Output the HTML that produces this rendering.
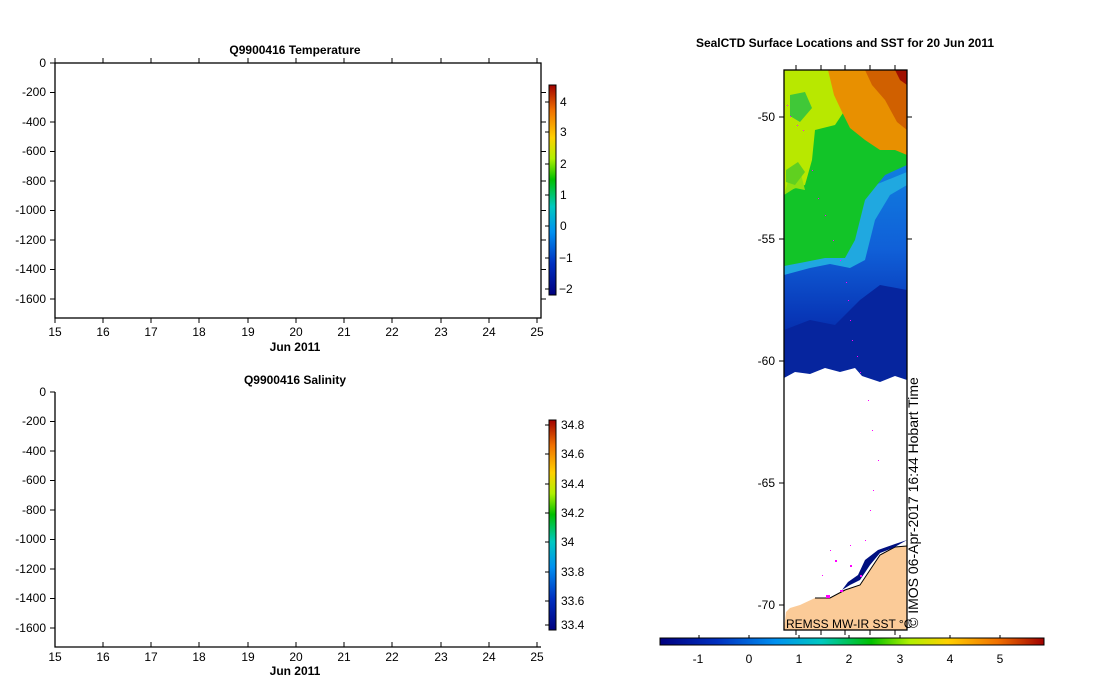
<!DOCTYPE html>
<html><head><meta charset="utf-8"><style>
html,body{margin:0;padding:0;background:#fff;}
svg{display:block;}
text{font-family:"Liberation Sans",sans-serif;font-size:12px;fill:#000;}
.b{font-weight:bold;}
</style></head><body>
<svg width="1099" height="700" viewBox="0 0 1099 700" xmlns="http://www.w3.org/2000/svg">
<defs>
<linearGradient id="jet" x1="0" y1="1" x2="0" y2="0">
<stop offset="0" stop-color="#00007f"/><stop offset="0.15" stop-color="#0030c0"/>
<stop offset="0.3" stop-color="#0090f0"/><stop offset="0.42" stop-color="#00c8c0"/>
<stop offset="0.55" stop-color="#00c000"/><stop offset="0.65" stop-color="#b0f000"/>
<stop offset="0.75" stop-color="#ffd000"/><stop offset="0.88" stop-color="#f07000"/>
<stop offset="1" stop-color="#a00000"/></linearGradient>
<linearGradient id="jeth" x1="0" y1="0" x2="1" y2="0">
<stop offset="0" stop-color="#00007f"/><stop offset="0.15" stop-color="#0030c0"/>
<stop offset="0.3" stop-color="#0090f0"/><stop offset="0.42" stop-color="#00c8c0"/>
<stop offset="0.55" stop-color="#00c000"/><stop offset="0.65" stop-color="#b0f000"/>
<stop offset="0.75" stop-color="#ffd000"/><stop offset="0.88" stop-color="#f07000"/>
<stop offset="1" stop-color="#a00000"/></linearGradient>
<linearGradient id="blu" x1="0" y1="0" x2="0" y2="1">
<stop offset="0" stop-color="#1080e0"/><stop offset="0.4" stop-color="#1060d8"/>
<stop offset="0.7" stop-color="#0838b8"/><stop offset="1" stop-color="#001a90"/></linearGradient>
</defs>

<!-- Temperature plot -->
<text x="295" y="54" text-anchor="middle" class="b">Q9900416  Temperature</text>
<rect x="55" y="63" width="486" height="255" fill="none" stroke="#000" stroke-width="1.3"/>
<g stroke="#000">
<path d="M50 63h5M50 92.5h5M50 122h5M50 151.5h5M50 181h5M50 210.5h5M50 240h5M50 269.5h5M50 299h5"/>
<path d="M541 92.5h5M541 122h5M541 151.5h5M541 181h5M541 210.5h5M541 240h5M541 269.5h5M541 299h5"/>
<path d="M55 58v5M103 58v5M151 58v5M199 58v5M248 58v5M296 58v5M344 58v5M392 58v5M441 58v5M489 58v5M537 58v5"/>
<path d="M55 318v5M103 318v5M151 318v5M199 318v5M248 318v5M296 318v5M344 318v5M392 318v5M441 318v5M489 318v5M537 318v5"/>
</g>
<g text-anchor="end">
<text x="46" y="67">0</text><text x="46" y="96">-200</text><text x="46" y="126">-400</text><text x="46" y="155">-600</text><text x="46" y="185">-800</text><text x="46" y="214">-1000</text><text x="46" y="244">-1200</text><text x="46" y="273">-1400</text><text x="46" y="303">-1600</text>
</g>
<g text-anchor="middle">
<text x="55" y="336">15</text><text x="103" y="336">16</text><text x="151" y="336">17</text><text x="199" y="336">18</text><text x="248" y="336">19</text><text x="296" y="336">20</text><text x="344" y="336">21</text><text x="392" y="336">22</text><text x="441" y="336">23</text><text x="489" y="336">24</text><text x="537" y="336">25</text>
<text x="295" y="351" class="b">Jun 2011</text>
</g>
<rect x="549" y="85" width="7" height="210" fill="url(#jet)" stroke="#000"/>
<g stroke="#000"><path d="M545 102h4M545 132h4M545 164h4M545 195h4M545 226h4M545 258h4M545 289h4"/></g>
<g><text x="560" y="106">4</text><text x="560" y="136">3</text><text x="560" y="168">2</text><text x="560" y="199">1</text><text x="560" y="230">0</text><text x="559" y="262">−1</text><text x="559" y="293">−2</text></g>

<!-- Salinity plot -->
<text x="295" y="384" text-anchor="middle" class="b">Q9900416  Salinity</text>
<path d="M55 392V647H541" fill="none" stroke="#000" stroke-width="1.3"/>
<g stroke="#000">
<path d="M50 392h5M50 421.5h5M50 451h5M50 480.5h5M50 510h5M50 539.5h5M50 569h5M50 598.5h5M50 628h5"/>
<path d="M55 647v-5M103 647v-5M151 647v-5M199 647v-5M248 647v-5M296 647v-5M344 647v-5M392 647v-5M441 647v-5M489 647v-5M537 647v-5"/>
</g>
<g text-anchor="end">
<text x="46" y="396">0</text><text x="46" y="425">-200</text><text x="46" y="455">-400</text><text x="46" y="484">-600</text><text x="46" y="514">-800</text><text x="46" y="543">-1000</text><text x="46" y="573">-1200</text><text x="46" y="602">-1400</text><text x="46" y="632">-1600</text>
</g>
<g text-anchor="middle">
<text x="55" y="661">15</text><text x="103" y="661">16</text><text x="151" y="661">17</text><text x="199" y="661">18</text><text x="248" y="661">19</text><text x="296" y="661">20</text><text x="344" y="661">21</text><text x="392" y="661">22</text><text x="441" y="661">23</text><text x="489" y="661">24</text><text x="537" y="661">25</text>
<text x="295" y="675" class="b">Jun 2011</text>
</g>
<rect x="549" y="420" width="7" height="210" fill="url(#jet)" stroke="#000"/>
<g stroke="#000"><path d="M545 425h4M545 454h4M545 484h4M545 513h4M545 542h4M545 572h4M545 601h4M545 625h4"/></g>
<g><text x="561" y="429">34.8</text><text x="561" y="458">34.6</text><text x="561" y="488">34.4</text><text x="561" y="517">34.2</text><text x="561" y="546">34</text><text x="561" y="576">33.8</text><text x="561" y="605">33.6</text><text x="561" y="629">33.4</text></g>

<!-- Map -->
<text x="845" y="47" text-anchor="middle" class="b">SealCTD Surface Locations and SST for 20 Jun 2011</text>
<rect x="784" y="70" width="123" height="560" fill="#fff"/>
<rect x="784" y="160" width="123" height="222" fill="url(#blu)"/>
<path d="M784 255L810 250L835 255L850 240L858 210L875 185L907 172V185L890 195L875 220L865 260L850 268L830 264L810 268L784 275Z" fill="#20a8e0"/>
<path d="M784 70H907V165L885 175L865 200L855 240L845 258L825 258L805 262L784 266Z" fill="#12c428"/>
<path d="M784 70H840L845 110L835 125L815 130L812 160L805 185L790 190L784 195Z" fill="#b8e800"/>
<path d="M784 195L795 188L805 190L800 170L790 175Z" fill="#90e010"/>
<path d="M790 95L805 92L812 108L800 122L790 116Z" fill="#40c838"/>
<path d="M786 170L798 162L805 172L795 185L786 182Z" fill="#60d020"/>
<path d="M828 70H907V155L895 150L880 150L865 140L850 128L842 112L834 95Z" fill="#e89000"/>
<path d="M865 70H907V130L897 122L885 100L872 85Z" fill="#d06000"/>
<path d="M895 70H907V85L900 80Z" fill="#a01000"/>
<path d="M860 300L880 285L907 290V382H784V330L810 320L835 325Z" fill="#06259e"/>
<path d="M784 382V378L795 372L810 374L825 368L840 372L855 368L862 376L880 382L895 376L907 380V382Z" fill="#fff"/>
<path d="M907 546L895 547L880 555L870 570L860 585L845 590L830 598L815 598L800 605L790 608L786 612L784 630H907Z" fill="#fbcb98"/>
<path d="M907 546L895 547L880 555L870 570L860 585L845 590L830 598L815 598" fill="none" stroke="#000" stroke-width="1"/>
<path d="M907 540L893 548L880 553L870 565L860 580L850 585L842 590L848 582L858 575L865 560L878 550L895 544Z" fill="#001080"/>
<g fill="#ff00ff">
<path d="M787 105h1v1h-1zM790 116h1v1h-1zM797 125h1v1h-1zM803 130h1v1h-1zM812 170h1v1h-1zM818 198h1v1h-1zM825 215h1v1h-1zM833 240h1v1h-1zM840 260h1v1h-1zM846 282h1v1h-1zM848 300h1v1h-1zM850 320h1v1h-1zM852 340h1v1h-1zM857 356h1v1h-1zM860 372h1v1h-1zM868 400h1v1h-1zM872 430h1v1h-1zM878 460h1v1h-1zM873 490h1v1h-1zM870 510h1v1h-1zM865 540h1v1h-1zM850 545h1v1h-1zM830 550h1v1h-1zM822 575h1v1h-1zM835 560h2v2h-2zM850 565h2v2h-2zM860 575h2v2h-2zM840 590h3v2h-3zM826 595h4v3h-4z"/>
</g>
<rect x="784" y="70" width="123" height="560" fill="none" stroke="#000" stroke-width="1.3"/>
<g stroke="#000">
<path d="M796 65v5M821 65v5M845 65v5M870 65v5M895 65v5"/>
<path d="M779 117h5M779 239h5M779 361h5M779 483h5M779 605h5"/>
<path d="M907 117h5M907 239h5"/>
<path d="M796 630v5M821 630v5M845 630v5M870 630v5M895 630v5"/>
</g>
<g text-anchor="end">
<text x="775" y="121">-50</text><text x="775" y="243">-55</text><text x="775" y="365">-60</text><text x="775" y="487">-65</text><text x="775" y="609">-70</text>
</g>
<text x="786" y="628" style="font-size:12px">REMSS MW-IR SST °C</text>
<text transform="translate(918,628) rotate(-90)" style="font-size:14px">© IMOS 06-Apr-2017 16:44 Hobart Time</text>
<rect x="660" y="638" width="384" height="7" fill="url(#jeth)" stroke="#000"/>
<g stroke="#000"><path d="M699 635v3M749 635v3M799 635v3M849 635v3M900 635v3M950 635v3M1000 635v3"/></g>
<g text-anchor="middle">
<text x="698" y="663">-1</text><text x="749" y="663">0</text><text x="799" y="663">1</text><text x="849" y="663">2</text><text x="900" y="663">3</text><text x="950" y="663">4</text><text x="1000" y="663">5</text>
</g>
</svg>
</body></html>
